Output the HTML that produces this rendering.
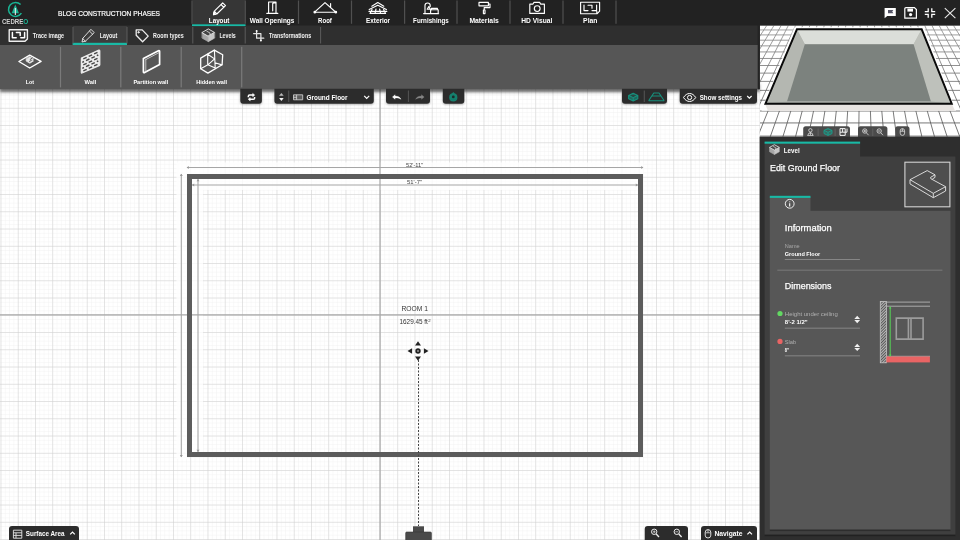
<!DOCTYPE html>
<html>
<head>
<meta charset="utf-8">
<title>Cedreo</title>
<style>
*{box-sizing:border-box;margin:0;padding:0}
html,body{width:960px;height:540px;overflow:hidden;background:#fff;font-family:"Liberation Sans",sans-serif;color:#fff}
#app{position:relative;width:960px;height:540px;overflow:hidden;background:#fff}
svg{position:absolute;left:0;top:0;will-change:transform}
text{font-family:"Liberation Sans",sans-serif}
</style>
</head>
<body>
<div id="app">
<!-- ================= CANVAS ================= -->
<svg id="canvas" width="760" height="540" viewBox="0 0 760 540">
<defs>
<pattern id="gmin" x="380" y="314.8" width="4.3125" height="4.3125" patternUnits="userSpaceOnUse"><path d="M0 0H4.4M0 0V4.4" stroke="#ececec" stroke-width="0.7" fill="none"/></pattern>
<pattern id="gmaj" x="380" y="314.8" width="17.25" height="17.25" patternUnits="userSpaceOnUse"><path d="M0 0H17.4M0 0V17.4" stroke="#cecece" stroke-width="1" fill="none"/></pattern>
</defs>
<rect width="760" height="540" fill="#fff"/>
<rect width="760" height="540" fill="url(#gmin)"/>
<rect width="760" height="540" fill="url(#gmaj)"/>
<!-- dims -->
<g fill="#fff" opacity="0.8"><rect x="176.500" y="162.500" width="467" height="11.500"/><rect x="176.500" y="174" width="10.500" height="285"/><rect x="192" y="179" width="446" height="11"/><rect x="192" y="190" width="11" height="262"/></g>
<path d="M187 167.500H643M192 185H638M181.300 174V457M198 179V452" stroke="#a6a6a6" stroke-width="1.100" fill="none"/>
<path d="M186.600 167.500l2.200-1.500v3zM643.400 167.500l-2.200-1.500v3zM181.300 173.800l-1.500 2.200h3zM181.300 457.200l-1.500-2.200h3zM192 185l2.200-1.500v3zM638 185l-2.200-1.500v3zM198 179l-1.500 2.200h3zM198 452l-1.500-2.200h3z" fill="#9a9a9a"/>
<path d="M380 0V540M0 314.8H760" stroke="#a8a8a8" stroke-width="1.2" fill="none"/>
<!-- walls -->
<rect x="189.5" y="176.5" width="451" height="278" fill="none" stroke="#5c5c5c" stroke-width="5"/>
<!-- dashed -->
<path d="M418.5 360V526" stroke="#444" stroke-width="1" stroke-dasharray="2 1.5" fill="none"/>
<!-- room text -->
<text x="401.5" y="311.3" font-size="6.6" font-weight="normal" fill="#333" textLength="26.5" lengthAdjust="spacingAndGlyphs" >ROOM 1</text>
<text x="399.5" y="324" font-size="6.6" font-weight="normal" fill="#333" textLength="28.4" lengthAdjust="spacingAndGlyphs" >1629.45 ft</text>
<text x="428.3" y="321.6" font-size="4.2" font-weight="normal" fill="#333" textLength="2.4" lengthAdjust="spacingAndGlyphs" >2</text>
<text x="406" y="166.9" font-size="5.2" font-weight="normal" fill="#444" textLength="17.3" lengthAdjust="spacingAndGlyphs" >52'-11&quot;</text>
<text x="407" y="184" font-size="5.2" font-weight="normal" fill="#444" textLength="15" lengthAdjust="spacingAndGlyphs" >51'-7&quot;</text>
<!-- move icon -->
<g fill="#222">
<circle cx="418" cy="351" r="2.7"/><circle cx="418" cy="351" r="1" fill="#999"/>
<path d="M418 341.3l3 4.2h-6zM418 360.7l3-4.2h-6zM407.5 351l4.6-2.8v5.6zM428.5 351l-4.6-2.8v5.6z"/>
</g>
<!-- camera -->
<rect x="413" y="526.3" width="11" height="6" fill="#4a4a4a"/>
<rect x="405.7" y="532" width="25.7" height="9" rx="1" fill="#4a4a4a" stroke="#333" stroke-width="0.6"/>
</svg>

<!-- ================= 3D VIEW ================= -->
<svg id="view3d" width="960" height="540" viewBox="0 0 960 540">
<defs><linearGradient id="gg" gradientUnits="userSpaceOnUse" x1="0" y1="25" x2="0" y2="138"><stop offset="0" stop-color="#8c8c8c"/><stop offset="1" stop-color="#4c4c4c"/></linearGradient><clipPath id="c3d"><rect x="759.800" y="25.400" width="200.200" height="111.400"/></clipPath></defs>
<g clip-path="url(#c3d)">
<rect x="760" y="25" width="200" height="113" fill="#fff"/>
<path d="M760 20.94H960 M760 25.31H960 M760 29.96H960 M760 34.91H960 M760 40.20H960 M760 45.86H960 M760 51.93H960 M760 58.46H960 M760 65.50H960 M760 73.12H960 M760 81.38H960 M760 90.38H960 M760 100.22H960 M760 111.02H960 M760 122.93H960 M760 136.12H960 M760 150.83H960 M760.62 24L679.51 140 M767.73 24L692.31 140 M774.84 24L705.11 140 M781.95 24L717.90 140 M789.06 24L730.70 140 M796.17 24L743.50 140 M803.28 24L756.30 140 M810.38 24L769.09 140 M817.49 24L781.89 140 M824.60 24L794.69 140 M831.71 24L807.48 140 M838.82 24L820.28 140 M845.93 24L833.08 140 M853.04 24L845.87 140 M860.15 24L858.67 140 M867.26 24L871.47 140 M874.37 24L884.27 140 M881.48 24L897.06 140 M888.59 24L909.86 140 M895.70 24L922.66 140 M902.81 24L935.45 140 M909.92 24L948.25 140 M917.03 24L961.05 140 M924.14 24L973.84 140 M931.25 24L986.64 140 M938.35 24L999.44 140 M945.46 24L1012.24 140 M952.57 24L1025.03 140 M959.68 24L1037.83 140" stroke="url(#gg)" stroke-width="0.8" fill="none"/>
<!-- slab -->
<polygon points="794.500,27.200 924,27.200 956,110.800 761.500,110.800" fill="#fff"/>
<polygon points="765,104 952,104 955,110.800 768,110.800" fill="#e7e3e0"/>
<!-- box -->
<polygon points="796.9,29.3 921.7,29.3 951.8,103.8 765.4,103.8" fill="#b9bcb6"/>
<polygon points="796.9,29.3 921.7,29.3 913.6,44.3 804.8,44.3" fill="#dbded9"/>
<polygon points="796.9,29.3 804.8,44.3 787,101.5 765.4,103.8" fill="#b4b7b1"/>
<polygon points="921.7,29.3 913.6,44.3 930.9,101.5 951.8,103.8" fill="#bec1bb"/>
<polygon points="804.8,44.3 913.6,44.3 930.9,101.5 787,101.5" fill="#7c827e"/>
<polygon points="787,101.5 930.9,101.5 951.8,103.8 765.4,103.8" fill="#a9aca7"/>
<polygon points="796.9,29.3 921.7,29.3 951.8,103.8 765.4,103.8" fill="none" stroke="#0a0a0a" stroke-width="1.9" stroke-linejoin="miter"/>
</g>
</svg>
<!-- ================= TOP BARS ================= -->
<svg id="chrome" width="960" height="540" viewBox="0 0 960 540">
<defs><filter id="sh" x="-5%" y="-20%" width="110%" height="160%"><feGaussianBlur stdDeviation="1.500"/></filter></defs>
<rect x="0" y="84" width="759.500" height="8.200" fill="#000" opacity="0.550" filter="url(#sh)"/>
<rect x="0" y="0" width="759.6" height="60" fill="#222222"/>
<rect x="759" y="0" width="201" height="25.6" fill="#222222"/>
<rect x="0" y="25.5" width="759.6" height="30" fill="#2f2f2f"/>
<rect x="0" y="45" width="759.600" height="44.300" fill="#565656"/>
<rect x="757.700" y="25" width="2.200" height="64.300" fill="#242424"/>
<rect x="192.3" y="0" width="53" height="24.6" fill="#363636"/>
<rect x="192" y="24.3" width="53.6" height="1.8" fill="#19b9a5"/>
<rect x="191.4" y="0.5" width="1.2" height="23.3" fill="#505050"/>
<rect x="244.70000000000002" y="0.5" width="1.2" height="23.3" fill="#505050"/>
<rect x="297.9" y="0.5" width="1.2" height="23.3" fill="#505050"/>
<rect x="350.9" y="0.5" width="1.2" height="23.3" fill="#505050"/>
<rect x="404.0" y="0.5" width="1.2" height="23.3" fill="#505050"/>
<rect x="456.4" y="0.5" width="1.2" height="23.3" fill="#505050"/>
<rect x="509.4" y="0.5" width="1.2" height="23.3" fill="#505050"/>
<rect x="562.4" y="0.5" width="1.2" height="23.3" fill="#505050"/>
<rect x="615.4" y="0.5" width="1.2" height="23.3" fill="#505050"/>
<rect x="73" y="26" width="54" height="17" fill="#3c3c3c"/>
<rect x="72.6" y="42.8" width="54.4" height="2.2" fill="#19b9a5"/>
<rect x="72.5" y="27" width="1" height="16.5" fill="#5c5c5c"/>
<rect x="126.5" y="27" width="1" height="16.5" fill="#5c5c5c"/>
<rect x="192.3" y="27" width="1" height="16.5" fill="#5c5c5c"/>
<rect x="244.7" y="27" width="1" height="16.5" fill="#5c5c5c"/>
<rect x="320.1" y="27" width="1" height="16.5" fill="#5c5c5c"/>
<rect x="59.9" y="46.8" width="1.2" height="40.6" fill="#7a7a7a"/>
<rect x="120.2" y="46.8" width="1.2" height="40.6" fill="#7a7a7a"/>
<rect x="180.6" y="46.8" width="1.2" height="40.6" fill="#7a7a7a"/>
<rect x="241.1" y="46.8" width="1.2" height="40.6" fill="#7a7a7a"/>
<text x="58" y="16.3" font-size="7.7" font-weight="normal" fill="#fff" textLength="102" lengthAdjust="spacingAndGlyphs" stroke="#fff" stroke-width="0.200">BLOG CONSTRUCTION PHASES</text>
<text x="208.8" y="22.9" font-size="7.8" font-weight="bold" fill="#fff" textLength="20.6" lengthAdjust="spacingAndGlyphs" >Layout</text>
<text x="249.8" y="22.9" font-size="7.8" font-weight="bold" fill="#fff" textLength="44.6" lengthAdjust="spacingAndGlyphs" >Wall Openings</text>
<text x="318.1" y="22.9" font-size="7.8" font-weight="bold" fill="#fff" textLength="13.8" lengthAdjust="spacingAndGlyphs" >Roof</text>
<text x="366" y="22.9" font-size="7.8" font-weight="bold" fill="#fff" textLength="24" lengthAdjust="spacingAndGlyphs" >Exterior</text>
<text x="413.1" y="22.9" font-size="7.8" font-weight="bold" fill="#fff" textLength="35.6" lengthAdjust="spacingAndGlyphs" >Furnishings</text>
<text x="469.4" y="22.9" font-size="7.8" font-weight="bold" fill="#fff" textLength="29.4" lengthAdjust="spacingAndGlyphs" >Materials</text>
<text x="521.3" y="22.9" font-size="7.8" font-weight="bold" fill="#fff" textLength="31" lengthAdjust="spacingAndGlyphs" >HD Visual</text>
<text x="583.1" y="22.9" font-size="7.8" font-weight="bold" fill="#fff" textLength="14.4" lengthAdjust="spacingAndGlyphs" >Plan</text>
<text x="32.8" y="38.3" font-size="6.4" font-weight="bold" fill="#f2f2f2" textLength="31.2" lengthAdjust="spacingAndGlyphs" >Trace image</text>
<text x="99.8" y="38.3" font-size="6.4" font-weight="bold" fill="#f2f2f2" textLength="17.5" lengthAdjust="spacingAndGlyphs" >Layout</text>
<text x="153.1" y="38.3" font-size="6.4" font-weight="bold" fill="#f2f2f2" textLength="30.6" lengthAdjust="spacingAndGlyphs" >Room types</text>
<text x="219.4" y="38.3" font-size="6.4" font-weight="bold" fill="#f2f2f2" textLength="16.4" lengthAdjust="spacingAndGlyphs" >Levels</text>
<text x="269" y="38.3" font-size="6.4" font-weight="bold" fill="#f2f2f2" textLength="42.2" lengthAdjust="spacingAndGlyphs" >Transformations</text>
<text x="25.8" y="83.7" font-size="6.2" font-weight="bold" fill="#fff" textLength="8.3" lengthAdjust="spacingAndGlyphs" >Lot</text>
<text x="84.6" y="83.7" font-size="6.2" font-weight="bold" fill="#fff" textLength="11.7" lengthAdjust="spacingAndGlyphs" >Wall</text>
<text x="133.4" y="83.7" font-size="6.2" font-weight="bold" fill="#fff" textLength="34.8" lengthAdjust="spacingAndGlyphs" >Partition wall</text>
<text x="196.2" y="83.7" font-size="6.2" font-weight="bold" fill="#fff" textLength="30.8" lengthAdjust="spacingAndGlyphs" >Hidden wall</text>
<g id="logo">
<path d="M20.6 4.6A7 7 0 1 0 21.4 13.2" fill="none" stroke="#19b393" stroke-width="1.5"/>
<path d="M15.3 4.6L19 13.2H11.6Z" fill="#19b393"/>
<rect x="14.8" y="8" width="1.1" height="7" fill="#e8e8e8"/>
<text x="1.9" y="23.7" font-size="6.6" font-weight="bold" fill="#d0d0d0" textLength="21.4" lengthAdjust="spacingAndGlyphs" >CEDRE</text>
<text x="23.3" y="23.7" font-size="6.6" font-weight="bold" fill="#19b393" textLength="5" lengthAdjust="spacingAndGlyphs" >O</text>
</g>
<g fill="none" stroke="#fff" stroke-width="1.150" stroke-linejoin="round" stroke-linecap="round">
<path d="M222.700 2.900l2.800 2.800-8.700 8.300-3.300 0.600 0.600-3.300zM221 4.500l2.800 2.800M214.200 11.200l2.700 2.700"/><path d="M213.500 14.600l0.400-2 1.600 1.600z" fill="#fff"/>
<path d="M268.6 13.2V2h7.4v11.2M266.8 13.4h11M275.9 2.2l-3.2 1.2v7.4"/>
<path d="M314.6 12.2L325 2.6l10.8 9.6M314.6 12.2h21.2M330.6 7.4V3.6"/>
<circle cx="314.8" cy="12.2" r="0.8" fill="#fff"/><circle cx="335.8" cy="12.2" r="0.8" fill="#fff"/>
<path d="M371.8 6.2l6-3.6 6 3.6M369.2 9.6l8.6-4.4 8.6 4.4M370 13.4h15.6M372 9.6l-2 3.8M376 9l-1 4.4M379.6 9l1 4.4M383.6 9.6l2 3.8M369 11.4h17.8"/>
<path d="M425 13.4V5.6a2.6 2.6 0 0 1 5.2 0v1M423.6 13.6h15M430.6 13.4v-3.6h7.6v3.6M431.4 9.8V8.4h6v1.4M428.8 6.6l1.4 2.6h-3z"/>
<path d="M479 2.4h9.4v3.4H479zM488.4 4h1.6v3.6h-5.8v2.4M483.4 10h1.6v3.6h-1.6z"/>
<path d="M529.8 4.2h3l1.2-1.8h5.6l1.2 1.8h3.6v9.2h-14.6z"/><circle cx="537.2" cy="8.6" r="2.9"/>
<path d="M580.6 2.2h19v9l-2.6 2.6h-16.4zM584 5v5.6h4M588 5.2h4v3M592 10.6h4.6V5M596.8 11.2v2.4"/>
</g>
<g fill="#fff">
<path d="M884.6 8h11.2v8h-8.6l-2.6 2.2z"/><path d="M888 10h5.4l-1.2 1.6 1.2 1.6H888z" fill="#556"/>
<path d="M906 7.6h8.4l2 2v8.6h-11.6V8.8a1.2 1.2 0 0 1 1.200-1.200z" fill="none" stroke="#fff" stroke-width="1.2"/><rect x="907.4" y="8.6" width="5.6" height="3" /><circle cx="910.6" cy="14.6" r="1.6"/>
<path d="M924.8 11.6h3.400v-3.400M935.200 11.600h-3.400v-3.400M924.800 14.400h3.400v3.400M935.200 14.400h-3.400v3.400" fill="none" stroke="#fff" stroke-width="1.300"/>
<path d="M944.8 8.200l10.600 10M955.400 8.200l-10.600 10" fill="none" stroke="#e8e8e8" stroke-width="1.100"/>
</g>
<g fill="none" stroke="#eee" stroke-width="0.9" stroke-linejoin="round" stroke-linecap="round">
<path d="M9.200 29.700h18.200v9.200l-2.400 2.400H9.200z" stroke-width="1.400"/><path d="M12.400 32.400v5.400h3.800M16.400 32.600h3.800v2.800M20.800 37.800h3.800V32.400" stroke-width="1.500" stroke="#fff"/>
<path d="M91.200 29.600l3 3-8.800 8.600-3.400 0.800 0.800-3.400zM89.600 31.200l3 3M82.800 38.600l2.800 2.800"/>
<path d="M136.200 29.900h6l6 6.200-5.600 5.700-6.400-6.600z" stroke-width="1.300"/><circle cx="138.500" cy="32.300" r="0.700" fill="#eee"/>
<path d="M202.200 32.600l6.100 3.500v5.600l-6.100-3.500z" fill="#a6a6a6" stroke="#a6a6a6" stroke-width="0.600"/><path d="M214.400 32.600l-6.100 3.500v5.600l6.100-3.500z" fill="#c6c6c6" stroke="#c6c6c6" stroke-width="0.600"/><path d="M202.200 32.400l6.100-3.500 6.100 3.500-6.100 3.500z" fill="#444" stroke="#e8e8e8" stroke-width="0.900"/><path d="M206.800 31.200l3.200 1.800v1.600" stroke="#ddd" stroke-width="0.800"/>
<path d="M256.600 31V38.200H263.800M253.600 33.600H260.900V40.200" stroke-width="1.200" stroke="#e4e4e4"/><circle cx="256.600" cy="30.900" r="1" fill="#fff" stroke="none"/><circle cx="260.900" cy="40.400" r="1" fill="#fff" stroke="none"/>
</g>
<g fill="none" stroke="#fff" stroke-width="1" stroke-linejoin="round" stroke-linecap="round">
<path d="M18.900 61.500L29.700 55.200 41.100 61.400 29.700 68z" stroke-width="1.350"/>
<path d="M29.600 56.800l4 2.200-1.700 1 1.600 0.900-3.600 2.300-3.700-2.100v-2.200z" fill="#e6e6e6" stroke="#e6e6e6" stroke-width="0.800"/><path d="M30.200 59.400l2-1.200M29.600 61.400l1.800-1" stroke="#555" stroke-width="1"/>
<path d="M81.400 58.100L98.900 50.100q0.800-0.200 0.900 0.600V64.700q0 0.600-0.600 0.900L82 73q-0.700 0.200-0.700-0.600z" fill="#ececec" stroke="#ececec" stroke-width="1.200"/>
<path d="M83.3 58.8L86.7 57.3M88.7 56.4L92.1 54.8M94.1 53.9L97.5 52.3M82.3 62.3L84.0 61.5M86.0 60.6L89.4 59.0M91.4 58.1L94.8 56.6M96.8 55.7L98.3 55.0M83.3 64.8L86.7 63.3M88.7 62.4L92.1 60.8M94.1 59.9L97.5 58.3M82.3 68.3L84.0 67.5M86.0 66.6L89.4 65.0M91.4 64.1L94.8 62.6M96.8 61.7L98.3 61.0M83.3 70.8L86.7 69.3M88.7 68.4L92.1 66.8M94.1 65.9L97.5 64.3" stroke="#474747" stroke-width="1.450" stroke-linecap="butt"/>
<path d="M143.400 58.600L158.400 50.800q1.200-0.400 1.200 0.800V64.400L144.600 72.600q-1.200 0.400-1.200-0.800z" stroke-width="1.700"/>
<path d="M145.800 59.600V71M145.800 59.600L159 52.600" stroke-width="0.800" stroke="#ddd"/>
<path d="M214.300 50.100L222.700 54.800 222.100 64.800 207.900 73.100 200.700 68.700V58.100z" stroke-width="1.300"/>
<path d="M207.700 54.200V64.800M214.400 50.100L215.200 67.900M207.700 54.200L214.600 58.900 207.900 64.800 200.700 68.700M207.900 64.800L215.200 68M214.900 62.800L222 64.900" stroke-width="1.100"/>
</g>
</svg>
<!-- ================= FLOATING BUTTONS ================= -->
<svg id="floats" width="960" height="540" viewBox="0 0 960 540">
<defs><filter id="sh2" x="-10%" y="-30%" width="120%" height="180%"><feGaussianBlur stdDeviation="0.9"/></filter></defs>
<rect x="240.3" y="92" width="21.599999999999966" height="12.6" rx="3" fill="#000" opacity="0.35" filter="url(#sh2)"/>
<rect x="274.4" y="92" width="99.40000000000003" height="12.6" rx="3" fill="#000" opacity="0.35" filter="url(#sh2)"/>
<rect x="386" y="92" width="44" height="12.6" rx="3" fill="#000" opacity="0.35" filter="url(#sh2)"/>
<rect x="442.8" y="92" width="21.5" height="12.6" rx="3" fill="#000" opacity="0.35" filter="url(#sh2)"/>
<rect x="622" y="92" width="45" height="12.6" rx="3" fill="#000" opacity="0.35" filter="url(#sh2)"/>
<rect x="679.7" y="92" width="77.29999999999995" height="12.6" rx="3" fill="#000" opacity="0.35" filter="url(#sh2)"/>
<path d="M240.3 88.7H261.9V100.7a3 3 0 0 1 -3 3H243.3a3 3 0 0 1 -3 -3Z" fill="#2c2c2c"/>
<path d="M274.4 88.7H373.8V100.7a3 3 0 0 1 -3 3H277.4a3 3 0 0 1 -3 -3Z" fill="#2c2c2c"/>
<path d="M386 88.7H430V100.7a3 3 0 0 1 -3 3H389a3 3 0 0 1 -3 -3Z" fill="#2c2c2c"/>
<path d="M442.8 88.7H464.3V100.7a3 3 0 0 1 -3 3H445.8a3 3 0 0 1 -3 -3Z" fill="#2c2c2c"/>
<path d="M622 88.7H667V100.7a3 3 0 0 1 -3 3H625a3 3 0 0 1 -3 -3Z" fill="#2c2c2c"/>
<path d="M679.7 88.7H757V100.7a3 3 0 0 1 -3 3H682.7a3 3 0 0 1 -3 -3Z" fill="#2c2c2c"/>
<g fill="none" stroke="#fff" stroke-width="1.500" stroke-linejoin="round">
<path d="M248.300 97.200v-0.800q0-1.300 1.300-1.300h3.600M254.600 97v0.900q0 1.300-1.300 1.300h-3.600"/>
<path d="M252.700 93.400l2 1.700-2 1.700zM250.200 97.500l-2 1.700 2 1.700z" fill="#fff" stroke-width="0.500"/>
</g>
<path d="M281.400 92.900l2.300 2.800h-4.600z" fill="#b8b8b8"/><path d="M281.400 100.900l2.300-2.800h-4.600z" fill="#f4f4f4"/>
<rect x="288.300" y="90.500" width="0.900" height="11.500" fill="#5a5a5a"/>
<path d="M293.500 94.800h9.200v5h-9.200z" fill="#999" fill-opacity="0.450" stroke="#d8d8d8" stroke-width="0.800"/><path d="M296.600 94.800v5M293.500 97.300h3.100" fill="none" stroke="#d8d8d8" stroke-width="0.800"/>
<text x="306.5" y="100" font-size="7.4" font-weight="bold" fill="#fff" textLength="41" lengthAdjust="spacingAndGlyphs" >Ground Floor</text>
<path d="M364.200 95.800l2.500 2.500 2.500-2.500" fill="none" stroke="#fff" stroke-width="1.200"/>
<path d="M392.400 97l2.700-2.300v1.400c3 0 4.900 1.100 5.900 3.200-1.700-1.200-3.300-1.500-5.900-1.400v1.400z" fill="#fff" stroke="#fff" stroke-width="0.300" stroke-linejoin="round"/>
<rect x="407.900" y="90.500" width="0.900" height="11.500" fill="#5a5a5a"/>
<path d="M424.200 97l-2.700-2.300v1.400c-3 0-4.900 1.100-5.900 3.200 1.700-1.200 3.300-1.500 5.900-1.400v1.400z" fill="#858585" stroke="#858585" stroke-width="0.300" stroke-linejoin="round"/>
<g><circle cx="453.300" cy="97.400" r="4.100" fill="#15806e"/><path d="M453.300 92l2.600 3h-5.200z" fill="#15806e"/><circle cx="453.300" cy="96.900" r="1.400" fill="#1c2a2a"/><path d="M450.600 99.400h5.400" stroke="#127a6a" stroke-width="0.800"/></g>
<g fill="none" stroke="#16907c" stroke-width="1.100" stroke-linejoin="round">
<path d="M628.600 95.400l4.600-2.200 4.600 2.200v3.400l-4.600 2.200-4.600-2.200zM628.600 95.400l4.600 2.200 4.600-2.200M633.200 97.600v3.400" fill="#17a08c" fill-opacity="0.500"/>
<path d="M648.600 100.800l5.200-7.800h5.200l5.200 7.800M648.600 100.800h15.600M652 96h8.600" />
</g>
<rect x="643.800" y="90.500" width="0.900" height="11.500" fill="#5a5a5a"/>
<path d="M683.500 97.500c1.600-2.600 3.800-4 6.100-4s4.500 1.400 6.100 4c-1.600 2.600-3.800 4-6.100 4s-4.500-1.400-6.100-4z" fill="none" stroke="#fff" stroke-width="1"/><circle cx="689.600" cy="97.500" r="2.100" fill="none" stroke="#fff" stroke-width="1"/>
<text x="699.7" y="100" font-size="7.4" font-weight="bold" fill="#fff" textLength="42.3" lengthAdjust="spacingAndGlyphs" >Show settings</text>
<path d="M747.200 96l2.200 2.200 2.200-2.200" fill="none" stroke="#fff" stroke-width="1.200"/>
<path d="M9 541V529a3 3 0 0 1 3 -3H76a3 3 0 0 1 3 3V541Z" fill="#2c2c2c"/>
<path d="M644.7 541V529a3 3 0 0 1 3 -3H685a3 3 0 0 1 3 3V541Z" fill="#2c2c2c"/>
<path d="M701 541V529a3 3 0 0 1 3 -3H754a3 3 0 0 1 3 3V541Z" fill="#2c2c2c"/>
<path d="M13.400 530.200h8.400v8h-8.400zM13.400 532.800h8.400M13.400 535.400h8.400M16 532.800v5.400" fill="none" stroke="#e8e8e8" stroke-width="0.900"/>
<text x="25.8" y="536.4" font-size="7.2" font-weight="bold" fill="#fff" textLength="38.8" lengthAdjust="spacingAndGlyphs" >Surface Area</text>
<path d="M70.200 534.400l2.300-2.300 2.300 2.300" fill="none" stroke="#fff" stroke-width="1.200"/>
<circle cx="654.2" cy="531.800" r="2.700" fill="none" stroke="#eee" stroke-width="1"/><path d="M656.2 534l2.800 3" stroke="#eee" stroke-width="1.300" fill="none"/>
<circle cx="676.8" cy="531.800" r="2.700" fill="none" stroke="#eee" stroke-width="1"/><path d="M678.8 534l2.800 3" stroke="#eee" stroke-width="1.300" fill="none"/>
<path d="M652.800 531.800h2.800M654.200 530.400v2.800M675.400 531.800h2.800" stroke="#eee" stroke-width="0.700" fill="none"/>
<rect x="705.200" y="529.600" width="5.600" height="8.400" rx="2.800" fill="none" stroke="#eee" stroke-width="0.900"/><path d="M708 529.600v3.200M705.200 532.800h5.600" stroke="#eee" stroke-width="0.700" fill="none"/>
<text x="714.5" y="536.4" font-size="7.2" font-weight="bold" fill="#fff" textLength="28" lengthAdjust="spacingAndGlyphs" >Navigate</text>
<path d="M747.400 534.400l2.300-2.300 2.300 2.300" fill="none" stroke="#fff" stroke-width="1.200"/>
<path d="M803.2 137.6V128.8a2.5 2.5 0 0 1 2.5 -2.5H847.5a2.5 2.5 0 0 1 2.5 2.5V137.6Z" fill="#4b4b4b"/>
<path d="M858 137.6V128.8a2.5 2.5 0 0 1 2.5 -2.5H884.9a2.5 2.5 0 0 1 2.5 2.5V137.6Z" fill="#4b4b4b"/>
<path d="M895.2 137.6V128.8a2.5 2.5 0 0 1 2.5 -2.5H907.0a2.5 2.5 0 0 1 2.5 2.5V137.6Z" fill="#4b4b4b"/>
<rect x="817.700" y="128.500" width="0.800" height="7.500" fill="#666"/><rect x="834.700" y="128.500" width="0.800" height="7.500" fill="#666"/><rect x="872.400" y="128.500" width="0.800" height="7.500" fill="#666"/>
<g fill="none" stroke="#e0e0e0" stroke-width="0.800">
<circle cx="810.400" cy="130.300" r="1.700"/><path d="M810.400 132v3M807.600 135.600l1.400-2.600h2.800l1.400 2.600z"/>
<path d="M840 128.600h5.200v6.800h-5.200zM842.600 128.600v3.600h4.400v-3.600M840 132.200h2.600" stroke="#f4f4f4" stroke-width="1"/>
<circle cx="864.800" cy="131" r="2.200"/><path d="M866.400 132.800l2.200 2.400M863.600 131h2.400M864.800 129.800v2.400"/>
<circle cx="879.200" cy="131" r="2.200"/><path d="M880.800 132.800l2.200 2.400M878 131h2.400"/>
<rect x="900.200" y="128.600" width="4.400" height="6.800" rx="2.200"/><path d="M902.400 128.600v2.600M900.200 131.200h4.400"/>
</g>
<g fill="none" stroke="#17a08c" stroke-width="0.900"><path d="M824 130.400l4-1.800 4 1.800v3.200l-4 1.800-4-1.800zM824 130.400l4 1.800 4-1.800M828 132.200v3.200" fill="#17a08c" fill-opacity="0.400"/></g>
</svg>
<!-- ================= RIGHT PANEL ================= -->
<svg id="rpanel" width="960" height="540" viewBox="0 0 960 540">
<rect x="759.600" y="136.600" width="200.400" height="404" fill="#2e2e2e"/>
<rect x="764.600" y="156.500" width="190.800" height="378.200" fill="#3f3f3f"/>
<rect x="764.600" y="534.700" width="190.800" height="1.500" fill="#1d1d1d" opacity="0.700"/>
<rect x="764.600" y="142" width="95.500" height="15" fill="#3f3f3f"/>
<rect x="764.600" y="141.600" width="95.500" height="2.100" fill="#19b9a5"/>
<path d="M769.500 147.600l4.900 2.700v4.200l-4.900-2.700z" fill="#a6a6a6" stroke="#a6a6a6" stroke-width="0.500"/><path d="M779.300 147.600l-4.900 2.700v4.200l4.900-2.700z" fill="#c6c6c6" stroke="#c6c6c6" stroke-width="0.500"/><path d="M769.500 147.400l4.900-2.700 4.900 2.700-4.900 2.700z" fill="#4a4a4a" stroke="#e8e8e8" stroke-width="0.800"/><path d="M773.200 146.400l2.600 1.400v1.300" stroke="#ddd" stroke-width="0.700" fill="none"/>
<text x="783.8" y="152.6" font-size="6.8" font-weight="bold" fill="#fff" textLength="15.9" lengthAdjust="spacingAndGlyphs" >Level</text>
<text x="770" y="170.8" font-size="9.4" font-weight="normal" fill="#fff" textLength="70" lengthAdjust="spacingAndGlyphs" stroke="#fff" stroke-width="0.250">Edit Ground Floor</text>
<rect x="904.900" y="162.200" width="45" height="44.600" fill="#4e4e4e" stroke="#d4d4d4" stroke-width="1.100"/>
<path d="M910 179.700L927.200 170.600 935 174.800 930.800 177.200q-1 0.800 0.200 1.600L945.600 186.700 933.300 193.300zM910 179.700v4.200l23.300 13.800 12.300-6.700v-4.300M933.300 193.300v4.400M935 174.800v2.600l-2.600 1.600" fill="none" stroke="#e8e8e8" stroke-width="0.900" stroke-linejoin="round"/>
<rect x="769.800" y="210.800" width="180.700" height="318.800" fill="#575757"/>
<rect x="769.800" y="529.600" width="180.700" height="1.500" fill="#222" opacity="0.600"/>
<rect x="769.800" y="197" width="40.700" height="14" fill="#575757"/>
<rect x="769.800" y="195.800" width="40.700" height="2.100" fill="#19b9a5"/>
<circle cx="789.700" cy="203.800" r="4.400" fill="none" stroke="#fff" stroke-width="0.900"/><path d="M789.700 201.400v0.800M789.700 203.200v3.200" stroke="#fff" stroke-width="1.100" fill="none"/>
<text x="784.8" y="230.5" font-size="9.3" font-weight="normal" fill="#fff" textLength="47" lengthAdjust="spacingAndGlyphs" stroke="#fff" stroke-width="0.250">Information</text>
<text x="784.8" y="247.8" font-size="5.6" font-weight="normal" fill="#a8a8a8" textLength="14.9" lengthAdjust="spacingAndGlyphs" >Name</text>
<text x="784.8" y="256.4" font-size="6.2" font-weight="bold" fill="#fff" textLength="35.4" lengthAdjust="spacingAndGlyphs" >Ground Floor</text>
<rect x="784.800" y="259.100" width="75.100" height="0.900" fill="#8c8c8c"/>
<rect x="777.300" y="269.700" width="165.100" height="0.900" fill="#7e7e7e"/>
<text x="784.8" y="289.3" font-size="9.3" font-weight="normal" fill="#fff" textLength="46.7" lengthAdjust="spacingAndGlyphs" stroke="#fff" stroke-width="0.250">Dimensions</text>
<circle cx="780" cy="313.500" r="2.600" fill="#62d862"/>
<text x="784.8" y="316.2" font-size="6" font-weight="normal" fill="#b0b0b0" textLength="53" lengthAdjust="spacingAndGlyphs" >Height under ceiling</text>
<text x="784.8" y="324" font-size="6.2" font-weight="bold" fill="#fff" textLength="22.9" lengthAdjust="spacingAndGlyphs" >8'-2 1/2&quot;</text>
<path d="M857.200 315.800l2.900 3.200h-5.800zM857.200 323.200l2.900-3.200h-5.800z" fill="#f0f0f0"/>
<rect x="784.800" y="327.700" width="75.100" height="0.900" fill="#8c8c8c"/>
<circle cx="780" cy="341.400" r="2.600" fill="#e96464"/>
<text x="784.8" y="344" font-size="6" font-weight="normal" fill="#b0b0b0" textLength="11.3" lengthAdjust="spacingAndGlyphs" >Slab</text>
<text x="784.8" y="352" font-size="6.2" font-weight="bold" fill="#fff" textLength="4.1" lengthAdjust="spacingAndGlyphs" >8&quot;</text>
<path d="M857.200 343.700l2.900 3.200h-5.800zM857.200 351.100l2.900-3.200h-5.800z" fill="#f0f0f0"/>
<rect x="784.800" y="355.400" width="75.100" height="0.900" fill="#8c8c8c"/>
<defs><pattern id="hat" width="2" height="2" patternUnits="userSpaceOnUse" patternTransform="rotate(45)"><rect width="1" height="2" fill="#b8b8b8"/></pattern></defs>
<rect x="880.300" y="301.400" width="6.100" height="61.400" fill="url(#hat)" stroke="#c4c4c4" stroke-width="0.800"/>
<path d="M886.400 302.100H930M886.400 306.200H930M886.400 356.300H930" stroke="#b4b4b4" stroke-width="0.900" fill="none"/>
<path d="M890.200 306.900V356.300" stroke="#55d455" stroke-width="1" fill="none"/><path d="M890.200 306.400l1.200 2h-2.400zM890.200 356.600l1.200-2h-2.400z" fill="#55d455"/>
<rect x="886.400" y="356.500" width="43.500" height="5.900" fill="#e96464"/>
<path d="M896.300 318.100h26.800v21h-26.800zM908.400 318.100v21M911 318.100v21" fill="none" stroke="#9c9c9c" stroke-width="1.600"/>
</svg>
</div>
</body>
</html>
